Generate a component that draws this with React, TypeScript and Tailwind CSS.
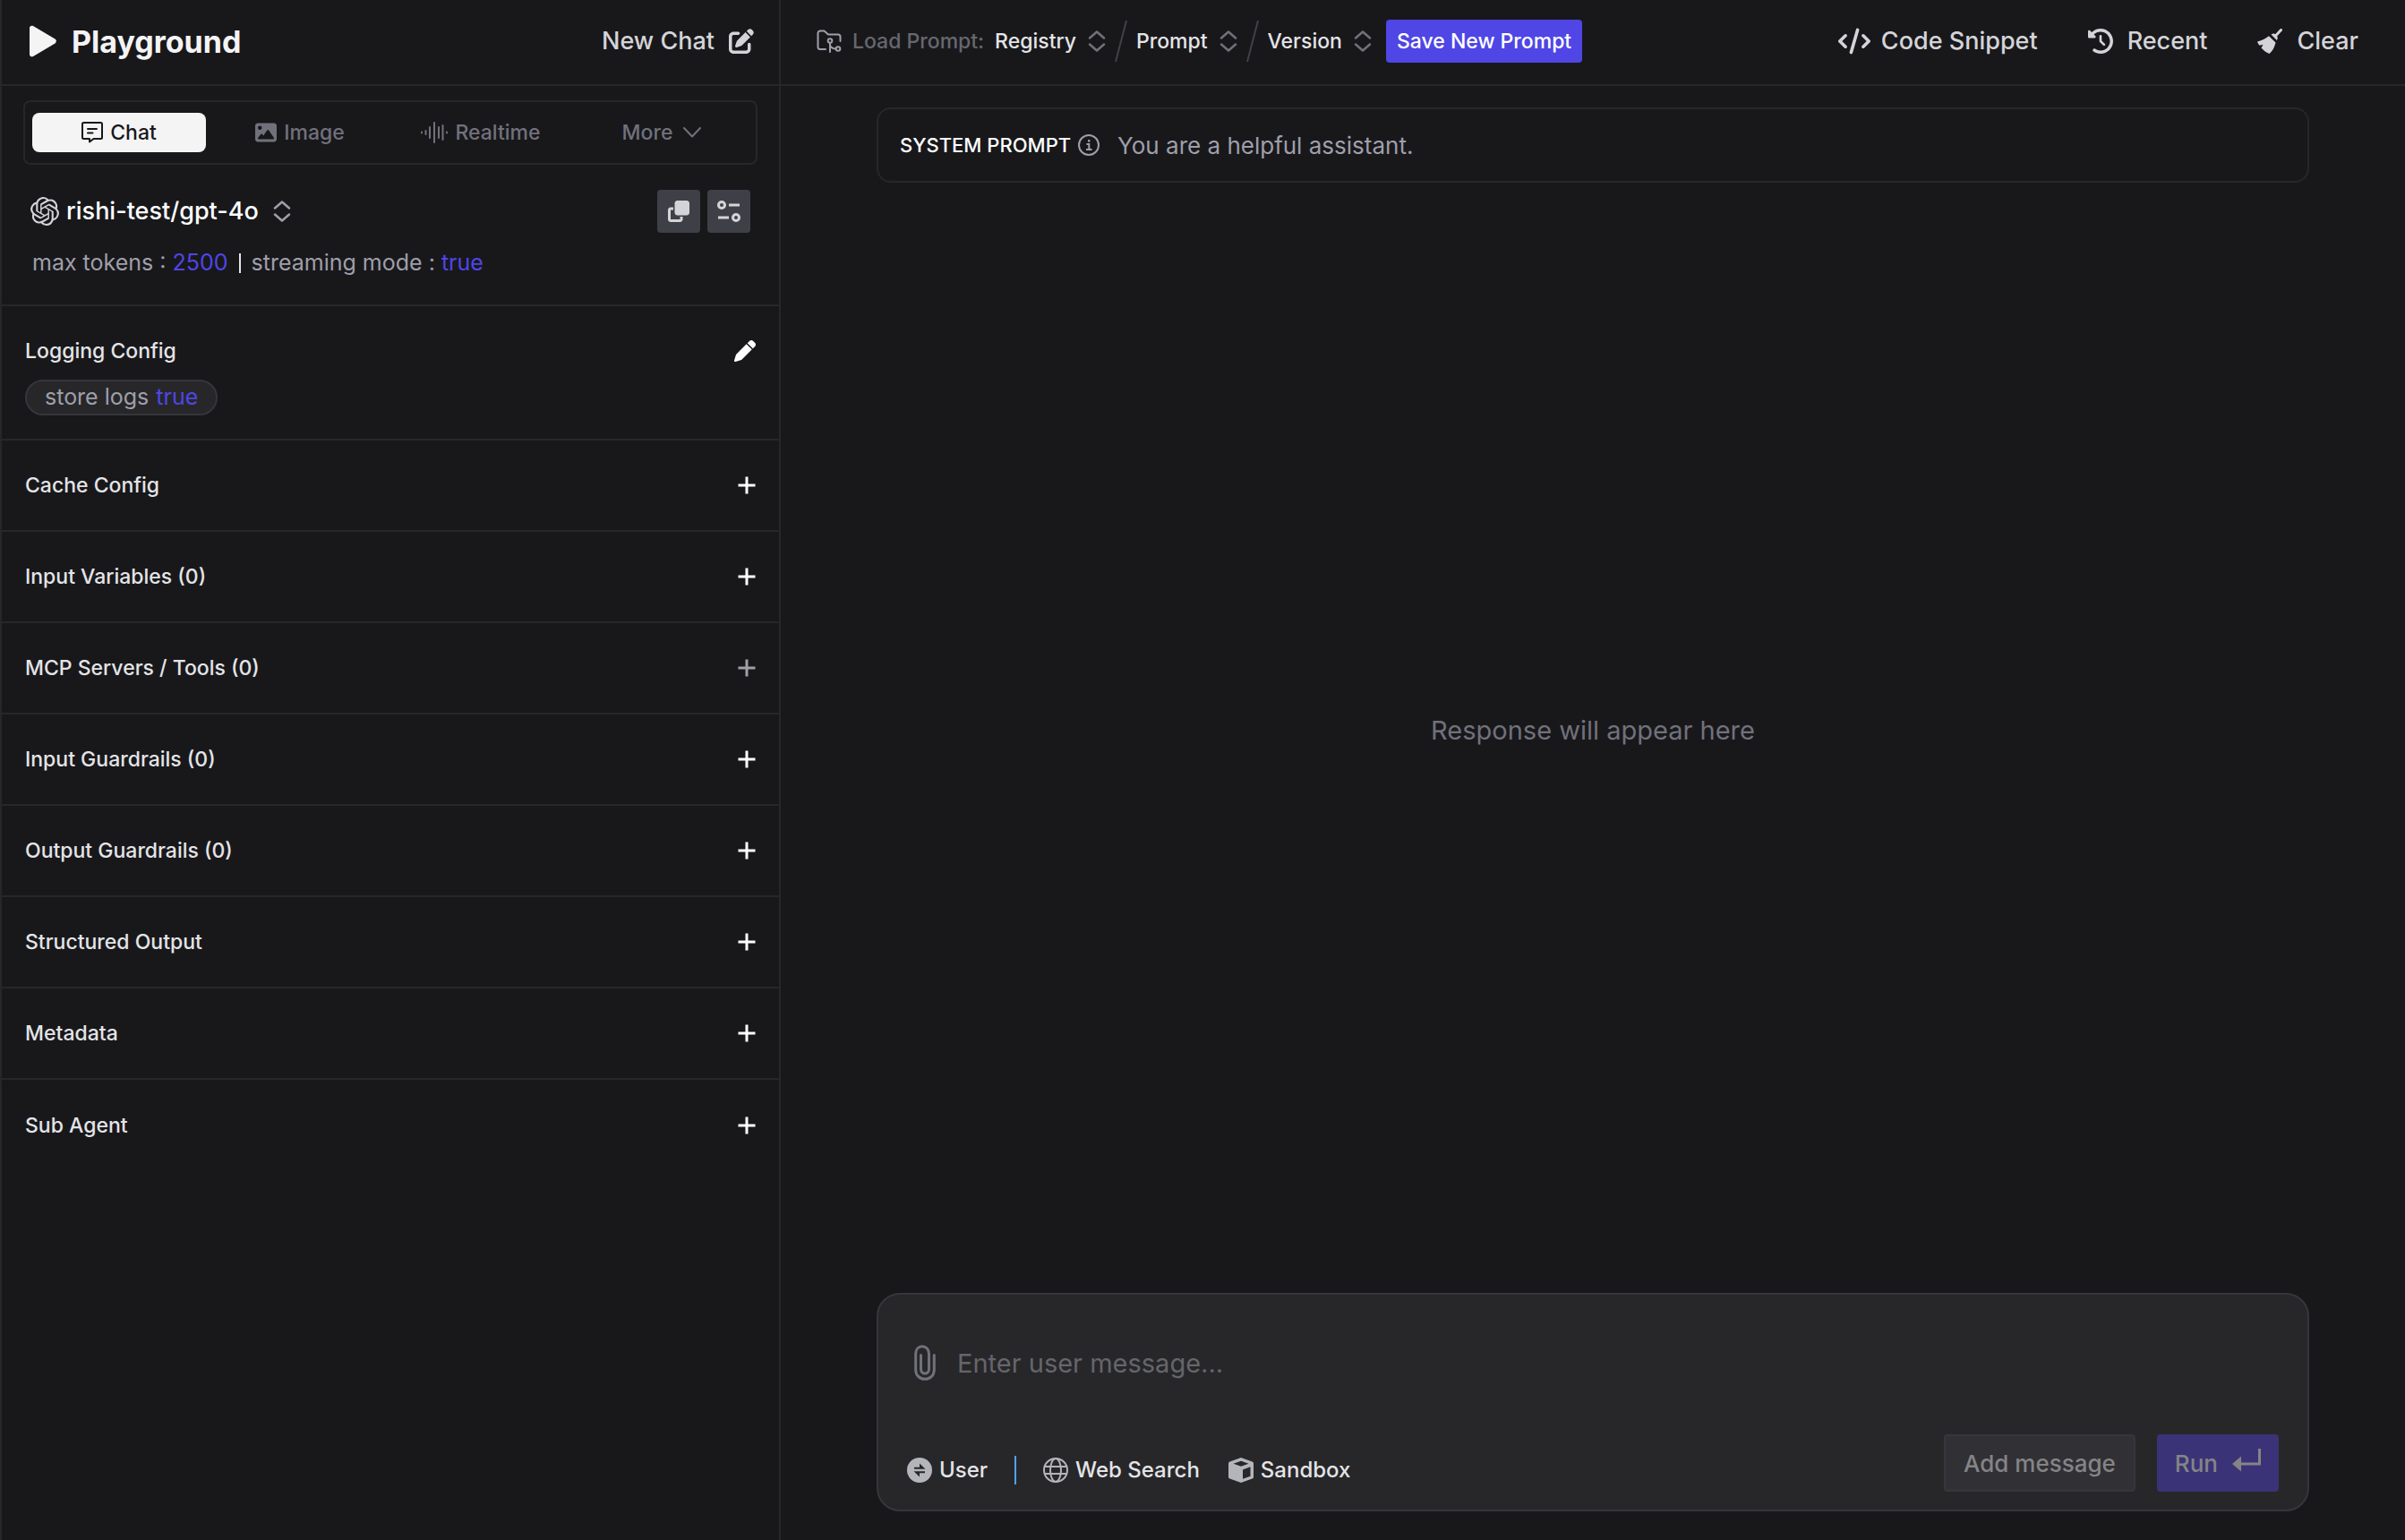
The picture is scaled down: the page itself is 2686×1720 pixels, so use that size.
import { useState } from 'react';
import type { ReactNode } from 'react';
import { FaClockRotateLeft, FaClone, FaCode, FaImage, FaPen, FaPenToSquare } from 'react-icons/fa6';
import { SiOpenai } from 'react-icons/si';

const PlayIcon = () => (
  <svg viewBox="0 0 32 36" className="h-9 w-8" fill="currentColor" aria-hidden="true">
    <path d="M1 3.2C1 1 3.300 0 5 1.100L29.500 15.600C31.300 16.700 31.300 19.300 29.500 20.400L5 34.900C3.300 36 1 35 1 32.800Z" />
  </svg>
);

const ChatIcon = () => (
  <svg viewBox="0 0 24 24" className="size-6" fill="none" stroke="currentColor" strokeWidth="2" strokeLinejoin="round" strokeLinecap="round" aria-hidden="true">
    <path d="M2.500 1H21.500A1.500 1.500 0 0 1 23 2.500V17.500A1.500 1.500 0 0 1 21.500 19H13.500L9 22.500V19H2.500A1.500 1.500 0 0 1 1 17.500V2.500A1.500 1.500 0 0 1 2.500 1Z" />
    <path d="M7 8H17M7 12.500H12.500" />
  </svg>
);

const WaveIcon = () => (
  <svg viewBox="0 0 30 24" className="h-6 w-[30px]" fill="none" stroke="currentColor" strokeWidth="2" strokeLinecap="round" aria-hidden="true">
    <path d="M1 11.500V12.500M5.500 10V14M10 6V18M15 1V23M20 6V18M24.500 4V20M29 11.500V12.500" />
  </svg>
);

const ChevronDownIcon = () => (
  <svg viewBox="0 0 20 12" className="ml-1 h-3 w-5" fill="none" stroke="currentColor" strokeWidth="2" strokeLinecap="round" strokeLinejoin="round" aria-hidden="true">
    <path d="M1 1L10 10.500L19 1" />
  </svg>
);

const UpDownIcon = () => (
  <svg viewBox="0 0 20 24" className="h-6 w-5" fill="none" stroke="currentColor" strokeWidth="2.500" strokeLinecap="round" strokeLinejoin="round" aria-hidden="true">
    <path d="M2 8.500L10 1.500L18 8.500M2 15.500L10 22.500L18 15.500" />
  </svg>
);

const SettingsIcon = () => (
  <svg viewBox="0 0 26 26" className="size-[26px]" fill="none" stroke="currentColor" strokeWidth="3" aria-hidden="true">
    <circle cx="5" cy="6" r="3.500" />
    <path d="M13 6H25M1 20H13" />
    <circle cx="21" cy="20" r="3.500" />
  </svg>
);

const PlusIcon = () => (
  <svg viewBox="0 0 20 20" className="size-5" stroke="currentColor" strokeWidth="3" aria-hidden="true">
    <path d="M10 0.500V19.500M0.500 10H19.500" />
  </svg>
);

const FolderBranchIcon = () => (
  <svg viewBox="0 0 28 26" className="h-[26px] w-7" fill="none" stroke="currentColor" strokeWidth="2" strokeLinecap="round" strokeLinejoin="round" aria-hidden="true">
    <path d="M10 22H4A2.500 2.500 0 0 1 1.500 19.500V4A2.500 2.500 0 0 1 4 1.500H8.500L13 5.500H24A2.500 2.500 0 0 1 26.500 8V13" />
    <circle cx="15" cy="12.500" r="2.300" />
    <circle cx="24" cy="21.500" r="2.300" />
    <path d="M15 15V25M15 18C17 21 19 21.500 21.500 21.500" />
  </svg>
);

const SlashIcon = () => (
  <svg viewBox="0 0 14 48" className="h-12 w-[14px] text-[#414147]" stroke="currentColor" strokeWidth="2" aria-hidden="true">
    <path d="M13 1L1 47" />
  </svg>
);

const BroomIcon = () => (
  <svg viewBox="0 0 28 28" className="size-7" aria-hidden="true">
    <path d="M26.500 1.500L20.500 8" fill="none" stroke="currentColor" strokeWidth="3" strokeLinecap="round" />
    <path d="M15.500 6.500C18 5 19.500 5.500 21 7C22.500 8.500 23.500 10.500 21.800 13Z" fill="currentColor" />
    <path d="M13 8.200L20.500 15.500C19.500 20 17.500 24.500 13.500 28C10 26.500 6.500 24 4.500 21.500L6.500 17.800L2.500 18.800C1.300 17.300 0.500 16 0 14.500C4.500 13.300 8.500 11.500 13 8.200Z" fill="currentColor" />
  </svg>
);

const InfoIcon = () => (
  <svg viewBox="0 0 24 24" className="mr-5 size-6 text-zinc-400" fill="none" stroke="currentColor" strokeWidth="2" aria-hidden="true">
    <circle cx="12" cy="12" r="11" />
    <path d="M9.500 11H12.300V17M9 17H15.500" />
    <path d="M11 7.300H13.400" strokeWidth="2.500" />
  </svg>
);

const PaperclipIcon = () => (
  <svg viewBox="0 0 24 40" className="h-10 w-6" fill="none" stroke="currentColor" strokeWidth="3" strokeLinecap="round" aria-hidden="true">
    <path d="M22.300 11.500V28C22.300 34 18 38.300 12 38.300S1.700 34 1.700 28V10C1.700 5 4.800 1.700 9 1.700S16.500 5 16.500 10V27C16.500 30 14.500 32 12 32S7.500 30 7.500 27V11.500" />
  </svg>
);

const SwapIcon = () => (
  <svg viewBox="0 0 28 28" className="size-7" aria-hidden="true">
    <circle cx="14" cy="14" r="14" fill="currentColor" />
    <path d="M8 10.700H14V6.500L20.500 12.700H8ZM20 17.300H14V21.500L7.500 15.300H20Z" fill="#27272a" />
  </svg>
);

const GlobeIcon = () => (
  <svg viewBox="0 0 28 28" className="size-7" fill="none" stroke="currentColor" strokeWidth="2" aria-hidden="true">
    <circle cx="14" cy="14" r="13" />
    <ellipse cx="14" cy="14" rx="6" ry="13" />
    <path d="M2 10H26M2 18H26" />
  </svg>
);

const CubeIcon = () => (
  <svg viewBox="0 0 28 28" className="size-7" aria-hidden="true">
    <path d="M14 0L26.500 4.500A2 2 0 0 1 28 6.500V21.500A2 2 0 0 1 26.500 23.500L14 28L1.500 23.500A2 2 0 0 1 0 21.500V6.500A2 2 0 0 1 1.500 4.500Z" fill="currentColor" />
    <path d="M14 3.800L22.500 6.800L14 9.800L5.500 6.800ZM16 13.500L24.500 10.300V20.700L16 23.800Z" fill="#27272a" />
  </svg>
);

const ReturnIcon = () => (
  <svg viewBox="0 0 32 32" className="size-8" aria-hidden="true">
    <path d="M30.500 0V17H8" fill="none" stroke="currentColor" strokeWidth="3" />
    <path d="M0 17L10 8.500V25.500Z" fill="currentColor" />
  </svg>
);

const tabs: { name: string; icon?: ReactNode; menu?: boolean }[] = [
  { name: 'Chat', icon: <ChatIcon /> },
  { name: 'Image', icon: <FaImage className="size-6" /> },
  { name: 'Realtime', icon: <WaveIcon /> },
  { name: 'More', menu: true },
];

const sections = [
  { title: 'Cache Config' },
  { title: 'Input Variables (0)' },
  { title: 'MCP Servers / Tools (0)', muted: true },
  { title: 'Input Guardrails (0)' },
  { title: 'Output Guardrails (0)' },
  { title: 'Structured Output' },
  { title: 'Metadata' },
  { title: 'Sub Agent' },
];

function Picker({ label }: { label: string }) {
  return (
    <label className="flex items-center gap-[13px] text-zinc-500">
      <select aria-label={label} className="appearance-none bg-transparent text-[23px] font-medium text-zinc-200 outline-none [field-sizing:content]">
        <option>{label}</option>
      </select>
      <UpDownIcon />
    </label>
  );
}

function Sidebar() {
  const [active, setActive] = useState('Chat');

  return (
    <aside className="flex w-[872px] shrink-0 flex-col border-x-2 border-zinc-800">
      <header className="flex h-24 items-center justify-between border-b-2 border-zinc-800 pr-7 pb-0.5 pl-[30px]">
        <h1 className="flex items-center gap-4 text-[34px] font-bold text-zinc-100">
          <PlayIcon />
          Playground
        </h1>
        <button className="flex items-center gap-4 text-[27px] font-medium text-zinc-300">
          New Chat
          <FaPenToSquare className="size-7" />
        </button>
      </header>

      <div role="tablist" className="mx-6 mt-4 grid h-[72px] grid-cols-4 items-center gap-2 rounded-lg border-2 border-zinc-800 px-2">
        {tabs.map((tab) => (
          <button
            key={tab.name}
            role="tab"
            aria-selected={tab.name === active}
            onClick={() => setActive(tab.name)}
            className={`flex h-11 items-center justify-center gap-2 rounded-lg text-[23px] font-medium ${
              tab.name === active ? 'bg-zinc-100 text-zinc-900' : 'text-zinc-500'
            }`}
          >
            {tab.icon}
            {tab.name}
            {tab.menu && <ChevronDownIcon />}
          </button>
        ))}
      </div>

      <section className="border-b-2 border-zinc-800 px-8 py-7">
        <div className="flex h-12 items-center justify-between">
          <label className="flex items-center gap-2 text-zinc-400">
            <SiOpenai className="size-8 text-zinc-300" />
            <select aria-label="Model" className="mr-2 appearance-none bg-transparent text-[27px] font-medium text-white outline-none [field-sizing:content]">
              <option>rishi-test/gpt-4o</option>
            </select>
            <UpDownIcon />
          </label>
          <div className="flex gap-2 text-zinc-300">
            <button aria-label="Compare" className="flex size-12 items-center justify-center rounded bg-zinc-700">
              <FaClone className="size-6" />
            </button>
            <button aria-label="Model settings" className="flex size-12 items-center justify-center rounded bg-zinc-700">
              <SettingsIcon />
            </button>
          </div>
        </div>
        <p className="mt-4 flex h-9 items-center gap-3 pl-0.5 text-[25px] text-zinc-400">
          <span>
            max tokens : <span className="text-[#4f46e5]">2500</span>
          </span>
          <span className="h-[22px] w-0.5 bg-zinc-200" />
          <span>
            streaming mode : <span className="text-[#4f46e5]">true</span>
          </span>
        </p>
      </section>

      <section className="border-b-2 border-zinc-800 px-[26px] pt-8 pb-[26px]">
        <div className="flex h-9 items-center justify-between">
          <h2 className="text-[23px] font-medium text-zinc-200">Logging Config</h2>
          <button aria-label="Edit logging config" className="text-white">
            <FaPen className="size-6" />
          </button>
        </div>
        <p className="mt-3.5 flex h-10 w-fit items-center gap-2 rounded-full border-2 border-[#35353b] bg-zinc-800 px-5 text-[25px] text-zinc-400">
          store logs <span className="text-[#4f46e5]">true</span>
        </p>
      </section>

      {sections.map((section) => (
        <section key={section.title} className="flex h-[102px] items-center justify-between border-b-2 border-zinc-800 px-[26px] last:border-b-0">
          <h2 className="text-[23px] font-medium text-zinc-200">{section.title}</h2>
          <button aria-label={`Add ${section.title}`} className={section.muted ? 'text-zinc-400' : 'text-white'}>
            <PlusIcon />
          </button>
        </section>
      ))}
    </aside>
  );
}

function Toolbar() {
  return (
    <header className="flex h-24 items-center justify-between border-b-2 border-zinc-800 pr-[52px] pb-0.5 pl-10">
      <div className="flex items-center gap-2.5">
        <span className="mr-0.5 flex items-center gap-3 text-zinc-400">
          <FolderBranchIcon />
          <span className="text-[23px] font-medium text-[#67676f]">Load Prompt:</span>
        </span>
        <Picker label="Registry" />
        <SlashIcon />
        <Picker label="Prompt" />
        <SlashIcon />
        <Picker label="Version" />
        <button className="ml-1.5 h-12 rounded bg-[#4f46e5] px-3 text-[23px] font-medium text-white">Save New Prompt</button>
      </div>
      <div className="flex items-center gap-14 text-[27px] font-medium text-zinc-300">
        <button className="flex items-center gap-3">
          <FaCode className="size-9" />
          Code Snippet
        </button>
        <button className="flex items-center gap-4">
          <FaClockRotateLeft className="size-7" />
          Recent
        </button>
        <button className="flex items-center gap-4">
          <BroomIcon />
          Clear
        </button>
      </div>
    </header>
  );
}

function Composer() {
  return (
    <form className="rounded-[26px] border-2 border-[#36363b] bg-zinc-800 px-8 pt-14 pb-5" onSubmit={(e) => e.preventDefault()}>
      <div className="flex items-start gap-6 pl-2">
        <button type="button" aria-label="Attach file" className="text-zinc-500">
          <PaperclipIcon />
        </button>
        <textarea
          rows={1}
          aria-label="User message"
          placeholder="Enter user message..."
          className="h-[100px] flex-1 resize-none bg-transparent text-[29px] leading-[42px] outline-none placeholder:text-[#65656c]"
        />
      </div>
      <div className="flex items-center justify-between">
        <div className="flex items-center gap-[30px] pt-4 text-2xl font-medium text-zinc-200">
          <button type="button" className="flex items-center gap-2">
            <span className="text-[#b4b4bb]"><SwapIcon /></span>
            User
          </button>
          <span className="h-8 w-0.5 bg-blue-400" />
          <div className="flex items-center gap-8">
            <button type="button" className="flex items-center gap-2">
              <span className="text-[#b4b4bb]"><GlobeIcon /></span>
              Web Search
            </button>
            <button type="button" className="flex items-center gap-2">
              <span className="text-[#b4b4bb]"><CubeIcon /></span>
              Sandbox
            </button>
          </div>
        </div>
        <div className="flex gap-6 text-[26px] font-medium text-[#848486]">
          <button type="button" className="h-16 rounded border-2 border-[#36363b] bg-[#313035] px-5">
            Add message
          </button>
          <button type="submit" className="flex h-16 items-center gap-4 rounded bg-[#3a3377] px-5">
            Run
            <ReturnIcon />
          </button>
        </div>
      </div>
    </form>
  );
}

export default function App() {
  return (
    <div className="flex min-h-screen bg-zinc-900 font-['Inter',sans-serif] text-zinc-200">
      <Sidebar />
      <main className="flex min-w-0 flex-1 flex-col">
        <Toolbar />
        <div className="mx-auto flex w-full max-w-[1600px] flex-1 flex-col pt-6 pb-8">
          <div className="flex h-[84px] items-center rounded-2xl border-2 border-zinc-800 px-6">
            <label htmlFor="system-prompt" className="mr-2 text-[22px] font-medium text-white">
              SYSTEM PROMPT
            </label>
            <InfoIcon />
            <input id="system-prompt" defaultValue="You are a helpful assistant." className="flex-1 bg-transparent text-[26px] text-zinc-400 outline-none" />
          </div>
          <div className="flex flex-1 items-center justify-center pb-4">
            <p className="text-[29px] text-zinc-500">Response will appear here</p>
          </div>
          <Composer />
        </div>
      </main>
    </div>
  );
}
